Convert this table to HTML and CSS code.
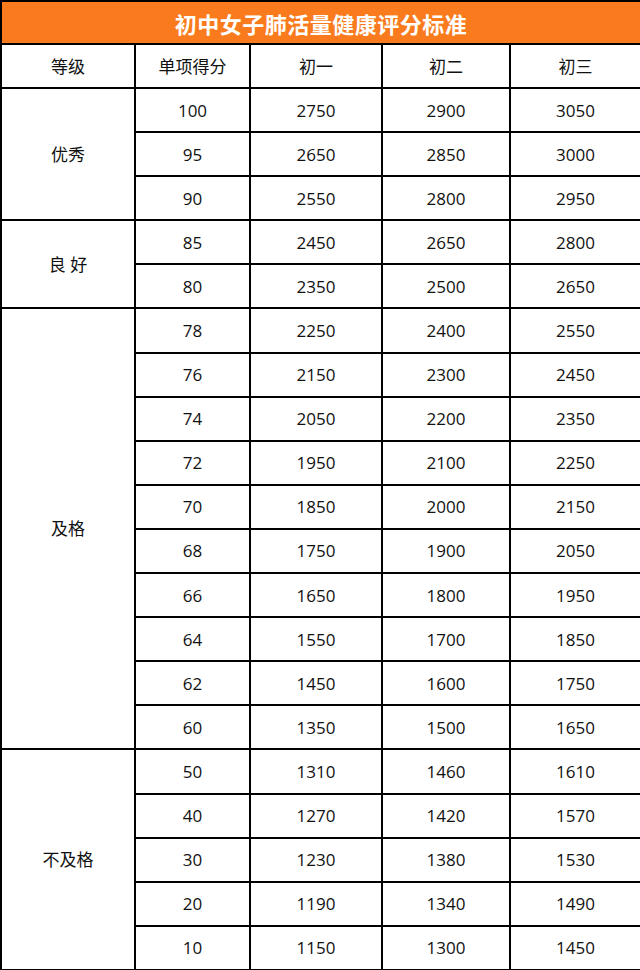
FILE: index.html
```html
<!DOCTYPE html>
<html lang="zh">
<head>
<meta charset="utf-8">
<link rel="stylesheet" href="styles.css">
</head>
<body>
<table class="score-table">
  <colgroup>
    <col class="c1"><col class="c2"><col class="c3"><col class="c4"><col class="c5">
  </colgroup>
  <thead>
    <tr class="title-row"><th colspan="5">初中女子肺活量健康评分标准</th></tr>
    <tr class="head-row"><th>等级</th><th>单项得分</th><th>初一</th><th>初二</th><th>初三</th></tr>
  </thead>
  <tbody>
    <tr><td rowspan="3">优秀</td><td>100</td><td>2750</td><td>2900</td><td>3050</td></tr>
    <tr><td>95</td><td>2650</td><td>2850</td><td>3000</td></tr>
    <tr><td>90</td><td>2550</td><td>2800</td><td>2950</td></tr>
    <tr><td rowspan="2">良 好</td><td>85</td><td>2450</td><td>2650</td><td>2800</td></tr>
    <tr><td>80</td><td>2350</td><td>2500</td><td>2650</td></tr>
    <tr><td rowspan="10">及格</td><td>78</td><td>2250</td><td>2400</td><td>2550</td></tr>
    <tr><td>76</td><td>2150</td><td>2300</td><td>2450</td></tr>
    <tr><td>74</td><td>2050</td><td>2200</td><td>2350</td></tr>
    <tr><td>72</td><td>1950</td><td>2100</td><td>2250</td></tr>
    <tr><td>70</td><td>1850</td><td>2000</td><td>2150</td></tr>
    <tr><td>68</td><td>1750</td><td>1900</td><td>2050</td></tr>
    <tr><td>66</td><td>1650</td><td>1800</td><td>1950</td></tr>
    <tr><td>64</td><td>1550</td><td>1700</td><td>1850</td></tr>
    <tr><td>62</td><td>1450</td><td>1600</td><td>1750</td></tr>
    <tr><td>60</td><td>1350</td><td>1500</td><td>1650</td></tr>
    <tr><td rowspan="5">不及格</td><td>50</td><td>1310</td><td>1460</td><td>1610</td></tr>
    <tr><td>40</td><td>1270</td><td>1420</td><td>1570</td></tr>
    <tr><td>30</td><td>1230</td><td>1380</td><td>1530</td></tr>
    <tr><td>20</td><td>1190</td><td>1340</td><td>1490</td></tr>
    <tr><td>10</td><td>1150</td><td>1300</td><td>1450</td></tr>
  </tbody>
</table>
</body>
</html>
```

FILE: styles.css
```css
html, body {
  margin: 0;
  padding: 0;
  background: #ffffff;
}

.score-table {
  width: 640px;
  border-collapse: collapse;
  table-layout: fixed;
  font-family: "Open Sans", "Noto Sans CJK SC", sans-serif;
  font-size: 17px;
  color: #111111;
}

.c1 { width: 134px; }
.c2 { width: 115px; }
.c3 { width: 132px; }
.c4 { width: 128px; }
.c5 { width: 131px; }

.score-table th,
.score-table td {
  border: 2px solid #000000;
  text-align: center;
  vertical-align: middle;
  padding: 0;
  font-weight: normal;
  height: 42.1px;
  line-height: 1;
}

.score-table .head-row th {
  height: 42px;
}

.score-table .title-row th {
  background: #fa7b1d;
  color: #ffffff;
  font-family: "Noto Sans CJK SC", sans-serif;
  font-weight: bold;
  font-size: 22px;
  height: 41px;
  letter-spacing: 0.5px;
}
```
